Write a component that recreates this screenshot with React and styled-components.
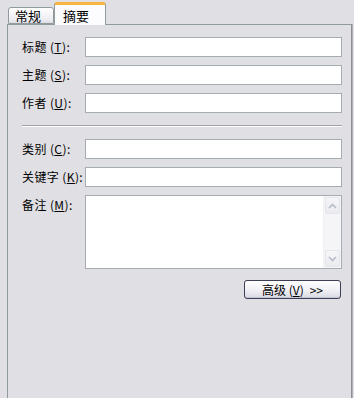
import React from 'react'
import styled, { createGlobalStyle } from 'styled-components'

const Global = createGlobalStyle`
  html, body {
    margin: 0;
    padding: 0;
    background: #e0dfe3;
  }
  body {
    font-family: "Noto Sans CJK SC", "DejaVu Sans", sans-serif;
    font-size: 12px;
    color: #000;
  }
`

const Page = styled.div`
  width: 354px;
  height: 398px;
  overflow: hidden;
  display: flex;
  flex-direction: column;
  background: #e0dfe3;
`

const TabStrip = styled.div`
  display: flex;
  align-items: flex-end;
  height: 25px;
  padding-left: 8px;
  position: relative;
  z-index: 1;
  margin-bottom: -1px;
`

const Tab = styled.div`
  box-sizing: border-box;
  display: flex;
  align-items: center;
  padding-left: ${p => (p.$active ? 8 : 6)}px;
  width: ${p => (p.$active ? 52 : 46)}px;
  height: ${p => (p.$active ? 23 : 17)}px;
  border: 1px solid #919b9c;
  border-bottom: ${p => (p.$active ? 'none' : '1px solid #919b9c')};
  border-top: ${p => (p.$active ? '3px solid #f5b53e' : '1px solid #919b9c')};
  border-radius: 3px 3px 0 0;
  background: ${p =>
    p.$active ? '#fcfcfe' : 'linear-gradient(#ffffff, #ecebf0 80%, #dedde4)'};
  line-height: 1;
  font-size: 13px;
  margin-bottom: ${p => (p.$active ? 0 : 1)}px;
`

const Panel = styled.div`
  flex: 1;
  margin: 0 2px 0 7px;
  border: 1px solid #919b9c;
  border-bottom: none;
  border-right-color: #8b8f97;
  box-shadow: 1px 0 0 #b5b4bb;
  padding: 12px 9px 0 14px;
  display: flex;
  flex-direction: column;
`

const Row = styled.div`
  display: flex;
  align-items: ${p => (p.$top ? 'flex-start' : 'center')};
  height: ${p => p.$h || 20}px;
  margin-bottom: ${p => p.$gap ?? 8}px;
`

const Label = styled.label`
  width: 63px;
  flex: none;
  font-size: 12px;
  line-height: 14px;
  letter-spacing: 0.4px;
  white-space: nowrap;
  padding-top: ${p => (p.$top ? 3 : 0)}px;

  u {
    text-decoration: underline;
  }
`

const Field = styled.div`
  flex: 1;
  box-sizing: border-box;
  height: ${p => p.$h || 20}px;
  border: 1px solid #a5acb2;
  background: #fff;
  display: flex;
  justify-content: flex-end;
`

const Divider = styled.div`
  height: 1px;
  background: #a0a0a8;
  border-bottom: 1px solid #fff;
  margin: 4px 0 12px 0;
`

const ScrollBar = styled.div`
  width: 17px;
  display: flex;
  flex-direction: column;
  background: #f5f5f7;
  border-left: 1px solid #f0f0f0;
`

const Arrow = styled.div`
  box-sizing: border-box;
  height: 17px;
  margin: 1px;
  border: 1px solid #e6e6ea;
  border-radius: 2px;
  background: linear-gradient(#f6f6f8, #ebebef);
  display: flex;
  align-items: center;
  justify-content: center;
`

const Track = styled.div`
  flex: 1;
`

const Footer = styled.div`
  display: flex;
  justify-content: flex-end;
  margin-top: 11px;
  padding-right: 1px;
`

const Button = styled.button`
  box-sizing: border-box;
  width: 97px;
  height: 19px;
  border: 1px solid #3c3f56;
  border-radius: 3px;
  background: linear-gradient(#ffffff, #f2f2f6 50%, #d8d8e2);
  box-shadow: inset 0 -1px 0 #c6c6d4;
  font-family: inherit;
  font-size: 12px;
  line-height: 1;
  padding: 0;
  color: #000;
  display: flex;
  align-items: center;
  justify-content: center;
  gap: 6px;
`

const Chevron = ({ up }) => (
  <svg width="9" height="6" viewBox="0 0 9 6">
    <path
      d={up ? 'M1 5 L4.5 1.5 L8 5' : 'M1 1 L4.5 4.5 L8 1'}
      fill="none"
      stroke="#b8bcc8"
      strokeWidth="1.6"
    />
  </svg>
)

const fields = [
  ['标题', 'T'],
  ['主题', 'S'],
  ['作者', 'U'],
]

const fields2 = [
  ['类别', 'C'],
  ['关键字', 'K'],
]

export default function App() {
  return (
    <Page>
      <Global />
      <TabStrip>
        <Tab>常规</Tab>
        <Tab $active>摘要</Tab>
      </TabStrip>
      <Panel>
        {fields.map(([name, key]) => (
          <Row key={key}>
            <Label>
              {name} (<u>{key}</u>):
            </Label>
            <Field />
          </Row>
        ))}
        <Divider />
        {fields2.map(([name, key]) => (
          <Row key={key}>
            <Label>
              {name} (<u>{key}</u>):
            </Label>
            <Field />
          </Row>
        ))}
        <Row $top $h={74} $gap={0}>
          <Label $top>
            备注 (<u>M</u>):
          </Label>
          <Field $h={74}>
            <ScrollBar>
              <Arrow><Chevron up /></Arrow>
              <Track />
              <Arrow><Chevron /></Arrow>
            </ScrollBar>
          </Field>
        </Row>
        <Footer>
          <Button>
            <span>高级 (<u>V</u>)</span>
            <span>&gt;&gt;</span>
          </Button>
        </Footer>
      </Panel>
    </Page>
  )
}
